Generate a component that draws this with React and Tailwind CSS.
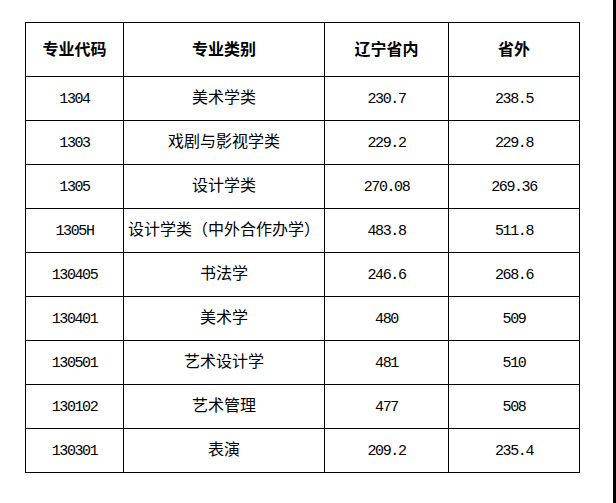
const rows = [
  ["1304", "美术学类", "230.7", "238.5"],
  ["1303", "戏剧与影视学类", "229.2", "229.8"],
  ["1305", "设计学类", "270.08", "269.36"],
  ["1305H", "设计学类（中外合作办学）", "483.8", "511.8"],
  ["130405", "书法学", "246.6", "268.6"],
  ["130401", "美术学", "480", "509"],
  ["130501", "艺术设计学", "481", "510"],
  ["130102", "艺术管理", "477", "508"],
  ["130301", "表演", "209.2", "235.4"],
];

const num = "border border-black text-center p-0 pt-[2px] leading-[20px] font-['Liberation_Mono',monospace] text-[15px] tracking-[-1.4px]";

export default function App() {
  return (
    <div className="w-[616px] h-[503px] bg-white flex overflow-hidden">
      <div className="flex-1 pt-[22px] pl-[25px]">
        <table className="border-collapse text-black text-[16px] font-['Noto_Sans_CJK_SC',sans-serif]">
          <colgroup>
            <col className="w-[98px]" />
            <col className="w-[201px]" />
            <col className="w-[124px]" />
            <col className="w-[131px]" />
          </colgroup>
          <thead>
            <tr className="h-[54px]">
              {["专业代码", "专业类别", "辽宁省内", "省外"].map((h) => (
                <th key={h} className="border border-black text-center font-bold text-[16px] p-0 pb-[4px] leading-[20px]">
                  {h}
                </th>
              ))}
            </tr>
          </thead>
          <tbody>
            {rows.map((r) => (
              <tr key={r[0]} className="h-[44px]">
                <td className={num}>{r[0]}</td>
                <td className="border border-black text-center p-0 pb-[5px] leading-[20px] whitespace-nowrap">{r[1]}</td>
                <td className={num}>{r[2]}</td>
                <td className={num}>{r[3]}</td>
              </tr>
            ))}
          </tbody>
        </table>
      </div>
      <div className="w-[3px] bg-black" />
    </div>
  );
}
